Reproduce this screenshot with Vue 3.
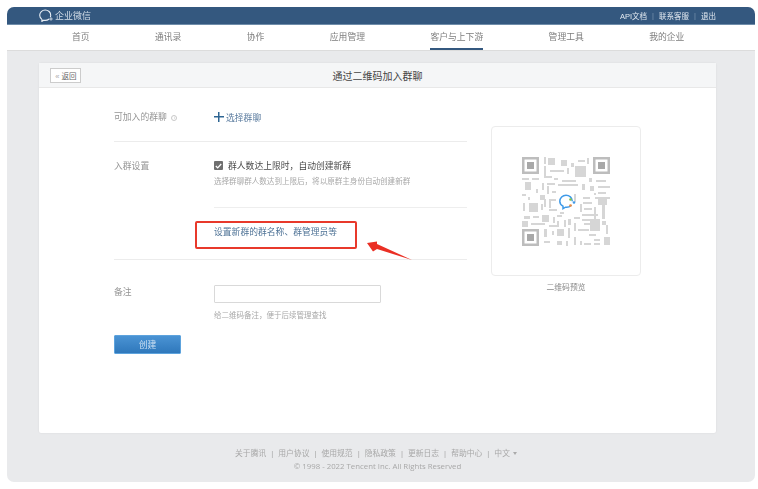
<template>
  <div class="shot">
    <header class="topbar">
      <div class="brand">
        <svg class="brand-icon" width="14" height="13" viewBox="0 0 14 13" fill="none">
          <path d="M9.8 10.2C8.8 11 7.6 11.4 6.2 11.4c-.5 0-1-.1-1.4-.2L2.9 12.4v-2C1.500 9.400.7 8 .7 6.300.7 3.400 3.100 1 6.200 1s5.500 2.300 5.500 5.200c0 .6-.1 1.100-.3 1.600" stroke="#e8eef5" stroke-width="1.100" stroke-linecap="round" />
          <circle cx="12" cy="10" r="1.100" stroke="#e8eef5" stroke-width=".8" />
        </svg>
        <span>企业微信</span>
      </div>
      <div class="toplinks">
        <a>API文档</a><i>|</i><a>联系客服</a><i>|</i><a>退出</a>
      </div>
    </header>

    <nav class="nav">
      <a v-for="item in navItems" :key="item" :class="{ active: item === '客户与上下游' }">{{ item }}</a>
    </nav>

    <main class="main">
      <section class="card">
        <div class="card-head">
          <button class="back"><span>«</span> 返回</button>
          <h1>通过二维码加入群聊</h1>
        </div>

        <div class="card-body">
          <div class="form">
            <div class="row row-group">
              <div class="label">可加入的群聊 <span class="info">i</span></div>
              <div class="pick"><span class="plus"></span>选择群聊</div>
            </div>

            <div class="row row-setting">
              <div class="label">入群设置</div>
              <div>
                <label class="check">
                  <span class="box">
                    <svg width="7" height="6" viewBox="0 0 7 6" fill="none"><path d="M.8 3l1.900 1.900L6.200 1" stroke="#fff" stroke-width="1.300" /></svg>
                  </span>
                  群人数达上限时&#65292;自动创建新群
                </label>
                <p class="hint">选择群聊群人数达到上限后&#65292;将以原群主身份自动创建新群</p>
              </div>
            </div>

            <div class="row row-link">
              <div></div>
              <div class="link-wrap">
                <a class="link">设置新群的群名称、群管理员等</a>
                <span class="mark"></span>
                <svg class="arrow" width="46" height="20" viewBox="0 0 46 20">
                  <path d="M0 2 L10 .5 L10 3 L45 19 L10 8 L6 10.500 Z" fill="#ea2f24" />
                </svg>
              </div>
            </div>

            <div class="row row-note">
              <div class="label">备注</div>
              <div>
                <input class="input" type="text" />
                <p class="hint">给二维码备注&#65292;便于后续管理查找</p>
              </div>
            </div>

            <button class="create">创建</button>
          </div>

          <aside class="preview">
            <div class="qr-card">
              <svg class="qr" width="88" height="90" viewBox="0 0 88 90" fill="#bdbdbd">
                <g v-for="f in finders" :key="f.x + '-' + f.y">
                  <path :d="`M${f.x} ${f.y}h17v17h-17z M${f.x + 2.500} ${f.y + 2.500}v12h12v-12z`" fill-rule="evenodd" />
                  <rect :x="f.x + 5" :y="f.y + 5" width="7" height="7" fill="#a8a8a8" />
                </g>
                <rect v-for="(r, i) in modules" :key="i" :x="r[0]" :y="r[1]" :width="r[2]" :height="r[3]" fill="#d6d6d6" />
                <path d="M49 48.500c-1.500 1.500-3.500 2-5.500 1.700l-2.500 1.500v-2.600c-2-1-3.200-2.700-3.200-4.900 0-3.300 2.800-6 6.200-6s6.200 2.500 6.200 5.500" fill="none" stroke="#3f9ae8" stroke-width="1.500" stroke-linecap="round" />
                <circle cx="48.500" cy="42.500" r="1.300" fill="#7cc24a" />
                <circle cx="52" cy="45.500" r="1.300" fill="#3f9ae8" />
                <circle cx="48.500" cy="48.500" r="1.300" fill="#f08a3c" />
              </svg>
            </div>
            <p class="qr-cap">二维码预览</p>
          </aside>
        </div>
      </section>

      <footer class="footer">
        <div class="foot-links">
          <template v-for="(link, i) in footLinks" :key="link">
            <span v-if="i > 0" class="sep">|</span><a>{{ link }}</a>
          </template>
          <span class="tri"></span>
        </div>
        <div class="copy">© 1998 - 2022 Tencent Inc. All Rights Reserved</div>
      </footer>
    </main>
  </div>
</template>

<script setup>
const navItems = ['首页', '通讯录', '协作', '应用管理', '客户与上下游', '管理工具', '我的企业']
const footLinks = ['关于腾讯', '用户协议', '使用规范', '隐私政策', '更新日志', '帮助中心', '中文']

const finders = [
  { x: 0, y: 0 },
  { x: 71, y: 0 },
  { x: 0, y: 72 }
]

// x, y, w, h of the pale qr blocks
const modules = [
  [22, 0, 2, 7], [26, 1, 7, 7], [39, 3, 6, 6], [49, 6, 3, 4], [56, 3, 7, 2], [65, 1, 2, 6],
  [22, 9, 2, 12], [28, 13, 14, 2], [45, 11, 2, 6], [53, 9, 11, 11], [22, 19, 8, 2],
  [0, 21, 7, 2], [10, 21, 7, 2], [32, 21, 4, 2], [40, 23, 14, 2], [67, 21, 3, 4], [74, 23, 10, 2],
  [3, 25, 6, 8], [20, 26, 2, 7], [25, 26, 8, 2], [25, 29, 2, 8], [36, 27, 20, 2], [60, 27, 3, 6],
  [68, 29, 4, 5], [76, 29, 12, 2], [14, 32, 2, 4], [30, 34, 4, 2], [76, 35, 8, 2], [0, 37, 4, 2],
  [18, 38, 5, 5], [52, 37, 2, 8], [61, 40, 7, 2], [72, 36, 2, 2], [73, 40, 15, 2],
  [6, 40, 2, 3], [22, 42, 2, 8], [27, 42, 7, 2], [27, 44, 2, 7], [61, 45, 9, 2], [76, 42, 9, 6],
  [1, 46, 2, 8], [7, 46, 9, 9], [19, 47, 2, 6], [27, 52, 8, 2], [58, 47, 2, 8], [62, 51, 8, 2],
  [72, 50, 2, 12], [80, 48, 3, 14], [38, 55, 4, 2], [60, 57, 16, 2], [2, 59, 6, 3], [11, 59, 6, 2],
  [20, 58, 7, 7], [31, 60, 2, 6], [35, 58, 5, 2], [46, 62, 3, 6], [52, 60, 6, 2], [60, 62, 10, 2],
  [0, 64, 6, 6], [9, 66, 14, 2], [27, 68, 9, 2], [35, 64, 2, 6], [42, 63, 2, 7], [52, 66, 2, 8],
  [62, 66, 16, 2], [68, 62, 10, 12], [80, 64, 4, 4], [22, 72, 3, 8], [30, 74, 2, 4], [35, 72, 7, 7],
  [46, 71, 2, 10], [56, 72, 11, 2], [67, 77, 7, 2], [84, 68, 2, 9], [22, 84, 6, 2], [35, 84, 5, 4],
  [44, 84, 2, 5], [52, 80, 2, 8], [58, 84, 2, 4], [62, 86, 7, 2], [72, 82, 6, 2], [72, 86, 6, 2], [82, 80, 6, 8]
]
</script>

<style scoped>
.shot {
  width: 748px;
  height: 475px;
  margin: 7px 0 0 7px;
  background: #e9eaec;
  border-radius: 7px;
  overflow: hidden;
  font-family: "Liberation Sans", "Noto Sans CJK SC", sans-serif;
  font-size: 8.800px;
  color: #8a8a8a;
  filter: blur(0.5px);
}
.topbar {
  height: 17px;
  padding: 0 39px 0 32px;
  background: #34587f;
  border-bottom: 1px solid #6f8daa;
  display: flex;
  align-items: center;
  justify-content: space-between;
  color: #e2e9f0;
}
.brand {
  display: flex;
  align-items: center;
  gap: 2px;
  font-size: 9px;
  color: #d5dfe9;
}
.toplinks {
  display: flex;
  align-items: center;
  font-size: 7.500px;
}
.toplinks i {
  margin: 0 5px;
  font-style: normal;
  color: #7a95b1;
}
.nav {
  height: 25px;
  padding-left: 65px;
  background: #fff;
  border-bottom: 1px solid #dcdcdc;
  display: flex;
  gap: 65.400px;
  color: #7d7d7d;
}
.nav a {
  height: 25px;
  line-height: 24px;
  box-sizing: border-box;
  white-space: nowrap;
}
.nav a.active {
  border-bottom: 2px solid #34587f;
}
.main {
  padding: 12px 39px 0 32px;
}
.card {
  height: 370px;
  background: #fff;
  border-radius: 2px;
  box-shadow: 0 0 2px rgba(0, 0, 0, 0.08);
}
.card-head {
  position: relative;
  height: 25px;
  background: #f5f6f7;
  border-bottom: 1px solid #e8e8e8;
  box-sizing: border-box;
  display: flex;
  align-items: center;
  justify-content: center;
}
.card-head h1 {
  margin: 0;
  font-size: 10px;
  font-weight: 400;
  color: #444;
}
.back {
  position: absolute;
  left: 11px;
  top: 5px;
  width: 31px;
  height: 15px;
  padding: 0 0 0 1px;
  background: #fff;
  border: 1px solid #ccc;
  font: inherit;
  font-size: 7.500px;
  color: #666;
}
.back span {
  color: #aaa;
}
.card-body {
  display: flex;
  padding-left: 75px;
}
.form {
  width: 353px;
  padding-top: 22px;
}
.row {
  display: grid;
  grid-template-columns: 100px 1fr;
  border-bottom: 1px solid #ececec;
}
.label {
  line-height: 14px;
  color: #949494;
}
.info {
  display: inline-block;
  width: 6px;
  height: 6px;
  margin-left: 2px;
  border: 1px solid #c8c8c8;
  border-radius: 50%;
  box-sizing: border-box;
  font-size: 4px;
  line-height: 4px;
  text-align: center;
  vertical-align: 1px;
  color: #bbb;
}
.row-group {
  height: 31px;
}
.pick {
  display: flex;
  align-items: center;
  height: 14px;
  color: #5b7c9f;
}
.plus {
  position: relative;
  width: 10px;
  height: 10px;
  margin-right: 2px;
  background:
    linear-gradient(#2e6593, #2e6593) center / 100% 1.500px no-repeat,
    linear-gradient(#2e6593, #2e6593) center / 1.500px 100% no-repeat;
}
.row-setting {
  padding-top: 17px;
  height: 66px;
  box-sizing: border-box;
  border-bottom: 0;
}
.row-setting > div:last-child {
  border-bottom: 1px solid #eee;
}
.check {
  display: flex;
  align-items: center;
  gap: 5px;
  height: 13px;
  color: #4a4a4a;
}
.box {
  width: 9px;
  height: 9px;
  background: #6f6f6f;
  border-radius: 1px;
  display: flex;
  align-items: center;
  justify-content: center;
}
.hint {
  margin: 5px 0 0;
  font-size: 7.560px;
  line-height: 10px;
  color: #a8a8a8;
  white-space: nowrap;
}
.row-link {
  height: 52px;
  padding-top: 17px;
  box-sizing: border-box;
}
.link-wrap {
  position: relative;
  height: 14px;
}
.link {
  line-height: 14px;
  color: #4f7396;
}
.mark {
  position: absolute;
  left: -19px;
  top: -4px;
  width: 162px;
  height: 28px;
  box-sizing: border-box;
  border: 2px solid #e8392b;
  border-radius: 2px;
}
.arrow {
  position: absolute;
  left: 153px;
  top: 16px;
}
.row-note {
  margin-top: 25px;
  border-bottom: 0;
}
.input {
  display: block;
  width: 167px;
  height: 18px;
  box-sizing: border-box;
  padding: 0 4px;
  background: #fff;
  border: 1px solid #d9d9d9;
  border-radius: 1px;
}
.row-note .hint {
  margin-top: 8px;
  font-size: 7.500px;
}
.create {
  display: block;
  width: 67px;
  height: 19px;
  margin-top: 14px;
  padding: 0;
  background: linear-gradient(#4a93d4, #2f78bb);
  border: 1px solid #5da3dd;
  border-radius: 1px;
  font: inherit;
  color: #cfe2f3;
}
.preview {
  width: 150px;
  margin: 38px 0 0 24px;
}
.qr-card {
  height: 150px;
  box-sizing: border-box;
  padding: 30px 0 0 30px;
  border: 1px solid #ececec;
  border-radius: 4px;
  background: #fff;
}
.qr {
  display: block;
  filter: blur(0.4px);
}
.qr-cap {
  margin: 7px 0 0;
  text-align: center;
  font-size: 7.800px;
  line-height: 10px;
  color: #8a8a8a;
}
.footer {
  margin-top: 14px;
  font-size: 7.800px;
  line-height: 13px;
  text-align: center;
  color: #a8a8a8;
}
.foot-links {
  display: flex;
  justify-content: center;
  align-items: center;
  height: 13px;
  padding-right: 3px;
}
.sep {
  margin: 0 5px;
}
.tri {
  width: 0;
  height: 0;
  margin-left: 3px;
  border-left: 2px solid transparent;
  border-right: 2px solid transparent;
  border-top: 3px solid #aaa;
}
.copy {
  font-family: "Open Sans", sans-serif;
  font-size: 7.800px;
}
</style>

<style>
body {
  background: #fff;
}
</style>
